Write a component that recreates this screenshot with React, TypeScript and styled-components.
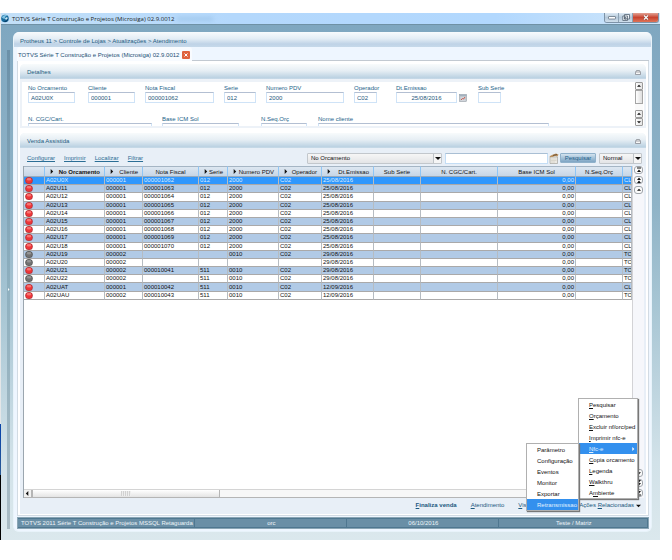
import React from "react";
import styled, { createGlobalStyle, css } from "styled-components";

const GlobalStyle = createGlobalStyle`
  *, *::before, *::after { box-sizing: border-box; }
  body { margin: 0; background: #fff; }
  body, button, input, select {
    font-family: "Liberation Sans", Arial, sans-serif;
    font-size: 6px;
    line-height: 8px;
    color: #111;
  }
  button, input, select { margin: 0; padding: 0; border: 0; border-radius: 0; background: none; }
  a { color: inherit; }
`;

const Page = styled.div`
  display: grid;
  grid-template-columns: 1px minmax(0, 1fr);
  min-height: 100vh;
  padding: 13px 12px 20px 0;
`;

const DesktopEdge = styled.div`
  background: linear-gradient(#e4e6e8 0 78%, #0b45a8 78% 80%, #2b5a93 87.6%, #000 87.6%);
`;

const Window = styled.div`
  position: relative;
  display: flex;
  flex-direction: column;
  min-width: 0;
`;

const TitleBar = styled.header`
  display: flex;
  align-items: center;
  gap: 3px;
  height: 12px;
  border-bottom: 1px solid #6f91a5;
  background: linear-gradient(90deg, #c3e0f8, #b4d8fc 35%, #b2d8fe 75%, #cfe6fa);
`;

const WindowTitle = styled.h1`
  margin: 0;
  font: 400 6px/10px "Open Sans", "Noto Sans", sans-serif;
  color: #1a1f26;
`;

const GlassSmear = styled.span`
  width: 36px;
  height: 4px;
  background: #8fb9df;
  opacity: 0.5;
  filter: blur(2px);
`;

const WindowButtons = styled.div`
  display: flex;
  align-self: flex-start;
  margin-left: auto;
  margin-right: 1px;
  border: 1px solid #7d93a8;
  border-top: 0;
  border-radius: 0 0 3px 3px;
  overflow: hidden;
`;

const WindowButton = styled.button<{ $close?: boolean }>`
  display: grid;
  place-items: center;
  width: ${(p) => (p.$close ? 25 : 14)}px;
  height: 9px;
  border-right: ${(p) => (p.$close ? 0 : 1)}px solid #8ea3b5;
  background: ${(p) =>
    p.$close
      ? "linear-gradient(#e2a294, #c9432f 50%, #dd7458)"
      : "linear-gradient(#dce9f4, #b5c8d9 50%, #cfdfec)"};
`;

const Body = styled.div`
  flex: 1;
  display: grid;
  grid-template-columns: 12px minmax(0, 1fr);
  padding: 7px 8px 8px 0;
  background: linear-gradient(#7fa7c0, #8fb3c7 35%, #a8c6d4 55%, #d2e2e9 85%, #dbe8ed);
`;

const SideHandle = styled.button`
  display: flex;
  align-items: center;
  justify-content: center;
  width: 3px;
  margin: 18px 0 3px 6px;
  background: linear-gradient(#6b90a8, #8fb0bf 50%, #a9bbc4);
`;

const Panel = styled.main`
  display: flex;
  flex-direction: column;
  min-width: 0;
  padding: 0 2px 2px 3px;
  border: 1px solid #e8f3fa;
  border-top: 0;
  border-radius: 6px;
  background: #eef6ff;
  overflow: hidden;
`;

const Breadcrumb = styled.nav`
  margin: 0 -2px 0 -3px;
  padding: 5px 6px 2px;
  background: linear-gradient(#f8fbfd, #e3edf5 45%, #bfd3e7 80%, #c6d9ea);
  color: #235a80;
`;

const TabRow = styled.div`
  display: flex;
  height: 14px;
`;

const Tab = styled.div`
  display: flex;
  align-items: center;
  gap: 3px;
  padding: 1px 2px 0 1px;
  border-radius: 3px 3px 0 0;
  background: #f8fbff;
  color: #1b5075;
`;

const TabFiller = styled.div`
  flex: 1;
  border-bottom: 1px solid #c2c9d1;
`;

const TabClose = styled.button`
  display: grid;
  place-items: center;
  width: 8px;
  height: 8px;
  border-radius: 1px;
  background: #df633f;
`;

const TabContent = styled.div`
  flex: 1;
  display: flex;
  flex-direction: column;
  gap: 5px;
  padding: 3px 2px 1px;
  border: 1px solid #d2dbe3;
  border-top: 0;
  background: #fff;
`;

const Group = styled.section<{ $grow?: boolean }>`
  ${(p) => p.$grow && css`flex: 1;`}
  display: flex;
  flex-direction: column;
  min-width: 0;
  border-radius: 5px 5px 0 0;
  background: ${(p) => (p.$grow ? "#e8eff7" : "#edf2f8")};
`;

const GroupHeader = styled.header`
  display: flex;
  align-items: center;
  justify-content: space-between;
  height: 15px;
  padding: 1px 4px 0 7px;
  border-radius: 5px 5px 0 0;
  background: linear-gradient(#f8fbfc, #e6eef4 45%, #bdd3e3 90%, #c8dae8);
`;

const GroupTitle = styled.h2`
  margin: 0;
  font-size: 6px;
  font-weight: 400;
  color: #1b5b80;
`;

const CollapseButton = styled.button`
  display: grid;
  place-items: center;
  width: 8px;
  height: 8px;
`;

const DetailsBody = styled.div`
  display: flex;
  height: 44px;
  margin: 3px 2px 2px;
  background: #fff;
  overflow: hidden;
`;

const Fields = styled.div`
  flex: 1;
  display: flex;
  flex-direction: column;
  gap: 12px;
  padding: 2px 0 0 6px;
  min-width: 0;
`;

const FieldRow = styled.div<{ $columns: string }>`
  display: grid;
  grid-template-columns: ${(p) => p.$columns};
  align-items: end;
`;

const Field = styled.div<{ $width: number }>`
  display: flex;
  flex-direction: column;
  width: ${(p) => p.$width}px;
`;

const FieldLabel = styled.label`
  color: #24648a;
  white-space: nowrap;
`;

const FieldInput = styled.input<{ $align?: string }>`
  width: 100%;
  height: 11px;
  padding: 1px 2px 0;
  border: 1px solid #cfe3f7;
  border-top: 1px solid #b3bfd2;
  background: #fff;
  color: #24587c;
  text-align: ${(p) => p.$align ?? "left"};
`;

const IconButton = styled.button`
  display: grid;
  place-items: center;
  justify-self: start;
  height: 11px;
`;

const ScrollColumn = styled.div`
  display: flex;
  flex-direction: column;
  width: 8px;
  margin-right: 1px;
  background: #fafafa;
`;

const ScrollButton = styled.button`
  display: grid;
  place-items: center;
  width: 8px;
  height: 8px;
  border: 1px solid #9b9b9b;
  border-radius: 1px;
  background: linear-gradient(90deg, #fff, #e5e5e5);
`;

const ScrollThumb = styled.div`
  height: 14px;
  border: 1px solid #a5a5a5;
  background: linear-gradient(90deg, #fff, #dedede);
  margin-bottom: auto;
`;

const Toolbar = styled.div`
  display: flex;
  align-items: center;
  height: 18px;
  padding: 2px 4px 0 7px;
`;

const ToolLinks = styled.div`
  flex: 0 0 280px;
  display: flex;
  gap: 9px;
`;

const ToolLink = styled.a`
  color: #2b6e95;
`;

const ComboBox = styled.div<{ $width: number }>`
  position: relative;
  flex: 0 1 ${(p) => p.$width}px;
  border: 1px solid #c2c7cc;
  border-radius: 1px;
  background: linear-gradient(#f6f6f6, #e3e4e6);
`;

const Select = styled.select`
  appearance: none;
  display: block;
  width: 100%;
  height: 9px;
  padding: 0 10px 0 3px;
`;

const ComboArrow = styled.span`
  position: absolute;
  inset: 0 0 0 auto;
  display: grid;
  place-items: center;
  width: 8px;
  border-left: 1px solid #bfc4c8;
  background: #f5f5f5;
  pointer-events: none;
`;

const SearchInput = styled.input`
  flex: 1;
  min-width: 0;
  height: 11px;
  margin: 0 1px 0 3px;
  padding: 0 3px;
  border: 1px solid #c3ddf5;
  border-top-color: #a9bfd4;
  background: #fff;
`;

const SearchButton = styled.button`
  width: 36px;
  height: 10px;
  margin: 0 3px 0 1px;
  border: 1px solid #8fb1cb;
  border-radius: 1px;
  background: linear-gradient(#d3e3ef, #a4c2d9 50%, #7fa5c3);
  color: #1f6089;
`;

const GridFrame = styled.div`
  flex: 1;
  display: grid;
  grid-template-columns: minmax(0, 1fr) 11px;
  margin: 0 2px 0 3px;
`;

const GridArea = styled.div`
  display: flex;
  flex-direction: column;
  justify-content: space-between;
  min-width: 0;
  border-left: 1px solid #9ba6af;
  border-right: 1px solid #d3d3d6;
  background: #fff;
`;

const Table = styled.table`
  width: 100%;
  height: 134px;
  border-collapse: separate;
  border-spacing: 0;
  table-layout: fixed;
`;

const Th = styled.th<{ $bold?: boolean }>`
  height: 11px;
  padding: 0 2px;
  border-right: 1px solid #8fc6f6;
  border-bottom: 1px solid #98aabb;
  border-top: 1px solid #a5b5c4;
  background: linear-gradient(#dde7f1, #c7d6e6);
  font-weight: ${(p) => (p.$bold ? 700 : 400)};
  line-height: 8px;
  white-space: nowrap;
  overflow: hidden;
`;

const HeadCell = styled.span<{ $sort?: boolean }>`
  display: flex;
  align-items: center;
  justify-content: ${(p) => (p.$sort ? "space-between" : "center")};
  padding: 0 2px;
`;

const Tr = styled.tr<{ $selected?: boolean }>`
  background: #fff;
  &:nth-child(even) { background: #b1cae6; }
  ${(p) => p.$selected && css`
    && { background: #2f97fd; color: #d8ecff; }
  `}
`;

const Td = styled.td<{ $right?: boolean }>`
  padding: 0 1px;
  border-right: 1px solid #b6bcc2;
  border-bottom: 1px solid #aaa9a9;
  line-height: 7px;
  text-align: ${(p) => (p.$right ? "right" : "left")};
  white-space: nowrap;
  overflow: hidden;
  svg { display: block; }
`;

const HScroll = styled.div`
  display: flex;
  height: 9px;
  border-top: 1px solid #d4d4d4;
  border-bottom: 1px solid #b5b5b5;
  background: #f7f7f7;
`;

const HScrollButton = styled.button`
  display: grid;
  place-items: center;
  width: 8px;
  border-right: 1px solid #b5b5b5;
  background: #f1f1f1;
`;

const HScrollThumb = styled.div`
  display: grid;
  place-items: center;
  width: 31%;
  border: 1px solid #b5b5b5;
  border-width: 0 1px;
  background: linear-gradient(#fff, #e4e4e4);
`;

const Grip = styled.span`
  width: 10px;
  height: 5px;
  background: repeating-linear-gradient(90deg, #d2d2d2 0 1px, #eee 1px 2px);
`;

const RowNav = styled.div`
  display: flex;
  flex-direction: column;
  align-items: center;
  gap: 2px;
  padding-bottom: 1px;
  background: #f6f7fb;
`;

const NavButton = styled.button<{ $push?: boolean }>`
  display: grid;
  place-items: center;
  width: 9px;
  height: 8px;
  margin-top: ${(p) => (p.$push ? "auto" : "0")};
  border: 1px solid #9fa5ab;
  border-radius: 3px;
  background: #fbfbfb;
`;

const Actions = styled.footer`
  display: flex;
  align-items: center;
  justify-content: flex-end;
  gap: 14px;
  height: 16px;
  padding: 0 5px 2px 0;
  color: #1b587e;
`;

const ActionButton = styled.button<{ $bold?: boolean }>`
  display: flex;
  align-items: center;
  gap: 2px;
  color: inherit;
  font-weight: ${(p) => (p.$bold ? 700 : 400)};
`;

const StatusBar = styled.footer`
  display: grid;
  grid-template-columns: max-content minmax(0, 157fr) minmax(0, 156fr) minmax(0, 154fr);
  margin-top: 1px;
  border: 1px solid #8aa5b4;
  background: #6a8fa6;
`;

const StatusCell = styled.span`
  height: 10px;
  padding: 0 1px 0 3px;
  border: 1px solid #4f7790;
  border-left: 0;
  color: #edf4f8;
  text-align: center;
  white-space: nowrap;
  &:first-child { text-align: left; }
`;

const menuBox = css`
  margin: 0;
  padding: 0;
  list-style: none;
  border: 1px solid #b0b0b0;
  background: #fff;
  box-shadow: 1px 1px 1px #777;
`;

const Menu = styled.ul`
  ${menuBox}
  position: absolute;
  right: 22px;
  bottom: 41px;
  width: 60px;
`;

const SubMenu = styled.ul`
  ${menuBox}
  position: absolute;
  right: 100%;
  top: 0;
  width: 53px;
`;

const MenuItem = styled.li`
  position: relative;
`;

const MenuButton = styled.button<{ $active?: boolean }>`
  display: flex;
  align-items: center;
  justify-content: space-between;
  width: 100%;
  height: 11px;
  padding: 0 2px 0 10px;
  white-space: nowrap;
  color: ${(p) => (p.$active ? "#e2f0ff" : "#111")};
  background: ${(p) => (p.$active ? "#3390ee" : "transparent")};
`;

const Triangle = ({ dir = "up", color = "#111", size = 4 }: { dir?: "up" | "down" | "left" | "right"; color?: string; size?: number }) => {
  const points = { up: "0,4 6,4 3,1", down: "0,2 6,2 3,5", left: "4,0 4,6 1,3", right: "2,0 2,6 5,3" }[dir];
  return (
    <svg width={size} height={size} viewBox="0 0 6 6" aria-hidden="true">
      <polygon points={points} fill={color} />
    </svg>
  );
};

const DoubleArrow = ({ kind }: { kind: "first" | "pageUp" | "pageDown" | "last" }) => (
  <svg width="6" height="6" viewBox="0 0 12 12" aria-hidden="true">
    {kind === "first" && <path d="M2 1H10V3H2ZM2 10L6 5L10 10Z" fill="#111" />}
    {kind === "pageUp" && <path d="M2 6L6 1L10 6ZM2 12L6 7L10 12Z" fill="#111" />}
    {kind === "pageDown" && <path d="M2 0L6 5L10 0ZM2 6L6 11L10 6Z" fill="#111" />}
    {kind === "last" && <path d="M2 9H10V11H2ZM2 2L6 7L10 2Z" fill="#111" />}
  </svg>
);

const StatusBall = ({ on }: { on: boolean }) => (
  <svg width="8" height="7" viewBox="0 0 16 14" role="img" aria-label={on ? "Encerrado" : "Cancelado"}>
    <ellipse cx="8" cy="7" rx="7.6" ry="7" fill={on ? "#b8343a" : "#5a5a5a"} />
    <ellipse cx="8" cy="7" rx="6" ry="5.6" fill={on ? "#ee3538" : "#707070"} />
    <ellipse cx="8" cy="4.6" rx="4.6" ry="2.6" fill={on ? "#f97573" : "#949494"} />
  </svg>
);

const TotvsLogo = () => (
  <svg width="8" height="9" viewBox="0 0 16 18" aria-hidden="true">
    <circle cx="8" cy="9" r="7.6" fill="#176a9c" />
    <path d="M2 7C4 1 11 1 13 4C9 3 7 6 8 9C5 10 3 9 2 7Z" fill="#7fc3e4" />
    <path d="M5 14C9 15 13 12 13 8C15 12 12 16 8 16Z" fill="#0b3f68" />
    <path d="M8 9C10 6 12 6 14 8L10 12Z" fill="#cfeaf5" />
  </svg>
);

const CollapseIcon = () => (
  <svg width="6" height="5" viewBox="0 0 12 10" aria-hidden="true">
    <path d="M1 5L3 1H9L11 5V9H1Z" fill="#f7f7f7" stroke="#7b7f88" strokeWidth="1.4" />
    <path d="M1 4H11" stroke="#7b7f88" strokeWidth="1.4" />
  </svg>
);

const CalendarIcon = () => (
  <svg width="8" height="8" viewBox="0 0 16 16" aria-hidden="true">
    <rect x="1" y="1" width="14" height="14" fill="#bfc6cd" stroke="#8b949c" />
    <rect x="1" y="1" width="14" height="3" fill="#a3b2bf" />
    <path d="M3 7H13M3 10H13M3 13H13" stroke="#e6e9ec" />
    <path d="M4 12L7 9L9 10L12 6" fill="none" stroke="#cf5b4f" strokeWidth="2" />
  </svg>
);

const FilterIcon = () => (
  <svg width="10" height="11" viewBox="0 0 20 22" aria-hidden="true">
    <path d="M2 8H17V21H2Z" fill="#ece9e2" stroke="#8b8880" />
    <path d="M4 12H15M4 15H15M4 18H12" stroke="#c8c4b9" />
    <path d="M2 6L8 3L14 1L19 3L17 7L12 6L7 8L1 8Z" fill="#b98f5c" />
    <path d="M8 5L16 3" stroke="#5b4129" strokeWidth="1.5" />
  </svg>
);

interface FieldData { id: string; label: string; width: number; value?: string; align?: string }

const TextField = ({ id, label, width, value = "", align }: FieldData) => (
  <Field $width={width}>
    <FieldLabel htmlFor={id}>{label}</FieldLabel>
    <FieldInput id={id} defaultValue={value} $align={align} />
  </Field>
);

const columns: { label: string; width?: number; sort?: boolean; bold?: boolean }[] = [
  { label: "", width: 21 },
  { label: "No Orcamento", width: 60, sort: true, bold: true },
  { label: "Cliente", width: 38, sort: true },
  { label: "Nota Fiscal", width: 56 },
  { label: "Serie", width: 29, sort: true },
  { label: "Numero PDV", width: 51, sort: true },
  { label: "Operador", width: 43, sort: true },
  { label: "Dt.Emissao", width: 52, sort: true },
  { label: "Sub Serie", width: 47 },
  { label: "N. CGC/Cart.", width: 77 },
  { label: "Base ICM Sol", width: 78 },
  { label: "N.Seq.Orç", width: 47 },
  { label: "" },
];

const rows: string[][] = [
  ["A02U0X", "000001", "000001062", "012", "2000", "C02", "25/08/2016", "CLIE"],
  ["A02U11", "000001", "000001063", "012", "2000", "C02", "25/08/2016", "CLIE"],
  ["A02U12", "000001", "000001064", "012", "2000", "C02", "25/08/2016", "CLIE"],
  ["A02U13", "000001", "000001065", "012", "2000", "C02", "25/08/2016", "CLIE"],
  ["A02U14", "000001", "000001066", "012", "2000", "C02", "25/08/2016", "CLIE"],
  ["A02U15", "000001", "000001067", "012", "2000", "C02", "25/08/2016", "CLIE"],
  ["A02U16", "000001", "000001068", "012", "2000", "C02", "25/08/2016", "CLIE"],
  ["A02U17", "000001", "000001069", "012", "2000", "C02", "25/08/2016", "CLIE"],
  ["A02U18", "000001", "000001070", "012", "2000", "C02", "25/08/2016", "CLIE"],
  ["A02U19", "000002", "", "", "0010", "C02", "29/08/2016", "TOD"],
  ["A02U20", "000002", "", "", "", "", "29/08/2016", "TOD"],
  ["A02U21", "000002", "000010041", "511", "0010", "C02", "29/08/2016", "TOD"],
  ["A02U22", "000002", "", "511", "0010", "C02", "29/08/2016", "TOD"],
  ["A02UAT", "000001", "000010042", "511", "0010", "C02", "12/09/2016", "CLIE"],
  ["A02UAU", "000002", "000010043", "511", "0010", "C02", "12/09/2016", "TOD"],
];
const cancelled = ["A02U19", "A02U20", "A02U22"];

const menuItems: [string, string, string][] = [
  ["", "P", "esquisar"],
  ["", "O", "rçamento"],
  ["", "E", "xcluir nf/orc/ped"],
  ["", "I", "mprimir nfc-e"],
  ["", "N", "fc-e"],
  ["", "C", "opia orcamento"],
  ["", "L", "egenda"],
  ["", "W", "alkthru"],
  ["A", "m", "biente"],
];
const subItems = ["Parâmetro", "Configuração", "Eventos", "Monitor", "Exportar", "Retransmissao"];

export default function App() {
  return (
    <Page>
      <GlobalStyle />
      <DesktopEdge />
      <Window>
        <TitleBar>
          <TotvsLogo />
          <WindowTitle>TOTVS Série T Construção e Projetos (Microsiga) 02.9.0012</WindowTitle>
          <GlassSmear />
          <WindowButtons>
            <WindowButton aria-label="Minimizar">
              <svg width="8" height="4" viewBox="0 0 8 4"><rect x="0.5" y="0.5" width="7" height="2.5" rx="0.5" fill="#fff" stroke="#566575" strokeWidth="0.7" /></svg>
            </WindowButton>
            <WindowButton aria-label="Restaurar">
              <svg width="8" height="7" viewBox="0 0 8 7"><path d="M2.5 0.5H7.5V5H2.5ZM0.8 2H5.5V6.5H0.8ZM2.5 3.5H4V5H2.5Z" fill="#eef3f7" stroke="#566575" strokeWidth="0.8" /></svg>
            </WindowButton>
            <WindowButton $close aria-label="Fechar">
              <svg width="6" height="5" viewBox="0 0 6 5"><path d="M1 0.5L5 4.5M5 0.5L1 4.5" stroke="#6b3a36" strokeWidth="2" /><path d="M1 0.5L5 4.5M5 0.5L1 4.5" stroke="#fff" strokeWidth="1.2" /></svg>
            </WindowButton>
          </WindowButtons>
        </TitleBar>

        <Body>
          <SideHandle aria-label="Abrir menu lateral"><Triangle dir="right" color="#fff" size={5} /></SideHandle>
          <Panel>
            <Breadcrumb>Protheus 11 &gt; Controle de Lojas &gt; Atualizações &gt; Atendimento</Breadcrumb>
            <TabRow>
              <Tab>
                TOTVS Série T Construção e Projetos (Microsiga) 02.9.0012
                <TabClose aria-label="Fechar aba">
                  <svg width="4" height="4" viewBox="0 0 4 4"><path d="M0.5 0.5L3.5 3.5M3.5 0.5L0.5 3.5" stroke="#fff" strokeWidth="1" /></svg>
                </TabClose>
              </Tab>
              <TabFiller />
            </TabRow>

            <TabContent>
              <Group>
                <GroupHeader>
                  <GroupTitle>Detalhes</GroupTitle>
                  <CollapseButton aria-label="Recolher detalhes"><CollapseIcon /></CollapseButton>
                </GroupHeader>
                <DetailsBody>
                  <Fields>
                    <FieldRow $columns="60px 57px 79px 42px 88px 42px 63px 19px 23px">
                      <TextField id="orc" label="No Orcamento" width={47} value="A02U0X" />
                      <TextField id="cli" label="Cliente" width={47} value="000001" />
                      <TextField id="nota" label="Nota Fiscal" width={69} value="000001062" />
                      <TextField id="serie" label="Serie" width={32} value="012" />
                      <TextField id="pdv" label="Numero PDV" width={78} value="2000" />
                      <TextField id="oper" label="Operador" width={23} value="C02" />
                      <TextField id="data" label="Dt.Emissao" width={61} value="25/08/2016" align="center" />
                      <IconButton aria-label="Calendário"><CalendarIcon /></IconButton>
                      <TextField id="sub" label="Sub Serie" width={23} />
                    </FieldRow>
                    <FieldRow $columns="134px 99px 57px 231px">
                      <TextField id="cgc" label="N. CGC/Cart." width={124} />
                      <TextField id="icm" label="Base ICM Sol" width={77} />
                      <TextField id="seq" label="N.Seq.Orç" width={46} />
                      <TextField id="nome" label="Nome cliente" width={231} />
                    </FieldRow>
                  </Fields>
                  <ScrollColumn>
                    <ScrollButton aria-label="Rolar para cima"><Triangle /></ScrollButton>
                    <ScrollThumb />
                    <ScrollButton aria-label="Campo anterior"><Triangle /></ScrollButton>
                    <ScrollButton aria-label="Próximo campo"><Triangle dir="down" /></ScrollButton>
                  </ScrollColumn>
                </DetailsBody>
              </Group>

              <Group $grow>
                <GroupHeader>
                  <GroupTitle>Venda Assistida</GroupTitle>
                  <CollapseButton aria-label="Recolher venda"><CollapseIcon /></CollapseButton>
                </GroupHeader>
                <Toolbar>
                  <ToolLinks>
                    {["Configurar", "Imprimir", "Localizar", "Filtrar"].map((t) => (
                      <ToolLink key={t} href="#">{t}</ToolLink>
                    ))}
                  </ToolLinks>
                  <ComboBox $width={135}>
                    <Select aria-label="Índice"><option>No Orcamento</option></Select>
                    <ComboArrow><Triangle dir="down" size={6} /></ComboArrow>
                  </ComboBox>
                  <SearchInput aria-label="Pesquisar por" />
                  <IconButton aria-label="Filtro"><FilterIcon /></IconButton>
                  <SearchButton>Pesquisar</SearchButton>
                  <ComboBox $width={43}>
                    <Select aria-label="Modo"><option>Normal</option></Select>
                    <ComboArrow><Triangle dir="down" size={6} /></ComboArrow>
                  </ComboBox>
                </Toolbar>

                <GridFrame>
                  <GridArea>
                    <Table>
                      <colgroup>
                        {columns.map((c, i) => <col key={i} width={c.width} />)}
                      </colgroup>
                      <thead>
                        <tr>
                          {columns.map((c, i) => (
                            <Th key={i} $bold={c.bold} scope="col">
                              <HeadCell $sort={c.sort}>
                                {c.sort && <Triangle dir="right" size={5} />}
                                {c.label}
                              </HeadCell>
                            </Th>
                          ))}
                        </tr>
                      </thead>
                      <tbody>
                        {rows.map((r, i) => (
                          <Tr key={r[0]} $selected={i === 0}>
                            <Td><StatusBall on={!cancelled.includes(r[0])} /></Td>
                            {r.slice(0, 7).map((v, j) => <Td key={j}>{v}</Td>)}
                            <Td />
                            <Td />
                            <Td $right>0,00</Td>
                            <Td />
                            <Td>{r[7]}</Td>
                          </Tr>
                        ))}
                      </tbody>
                    </Table>
                    <HScroll>
                      <HScrollButton aria-label="Rolar para a esquerda"><Triangle dir="left" size={5} /></HScrollButton>
                      <HScrollThumb><Grip /></HScrollThumb>
                    </HScroll>
                  </GridArea>
                  <RowNav>
                    <NavButton aria-label="Primeiro"><DoubleArrow kind="first" /></NavButton>
                    <NavButton aria-label="Página anterior"><DoubleArrow kind="pageUp" /></NavButton>
                    <NavButton aria-label="Anterior"><Triangle /></NavButton>
                    <NavButton $push aria-label="Próximo"><Triangle dir="down" /></NavButton>
                    <NavButton aria-label="Próxima página"><DoubleArrow kind="pageDown" /></NavButton>
                    <NavButton aria-label="Último"><DoubleArrow kind="last" /></NavButton>
                  </RowNav>
                </GridFrame>

                <Actions>
                  <ActionButton $bold><span><u>F</u>inaliza venda</span></ActionButton>
                  <ActionButton><span><u>A</u>tendimento</span></ActionButton>
                  <ActionButton><span><u>V</u>isualizar vendas</span></ActionButton>
                  <ActionButton><span>Ações <u>R</u>elacionadas</span><Triangle dir="down" size={5} /></ActionButton>
                </Actions>
              </Group>
            </TabContent>

            <StatusBar>
              <StatusCell>TOTVS 2011 Série T Construção e Projetos MSSQL Retaguarda</StatusCell>
              <StatusCell>orc</StatusCell>
              <StatusCell>06/10/2016</StatusCell>
              <StatusCell>Teste / Matriz</StatusCell>
            </StatusBar>
          </Panel>
        </Body>

        <Menu>
          {menuItems.map(([pre, key, post]) => (
            <MenuItem key={key}>
              <MenuButton $active={key === "N"}>
                <span>{pre}<u>{key}</u>{post}</span>
                {key === "N" && <Triangle dir="right" color="#fff" />}
              </MenuButton>
              {key === "N" && (
                <SubMenu>
                  {subItems.map((s) => (
                    <MenuItem key={s}>
                      <MenuButton $active={s === "Retransmissao"}>{s}</MenuButton>
                    </MenuItem>
                  ))}
                </SubMenu>
              )}
            </MenuItem>
          ))}
        </Menu>
      </Window>
    </Page>
  );
}
